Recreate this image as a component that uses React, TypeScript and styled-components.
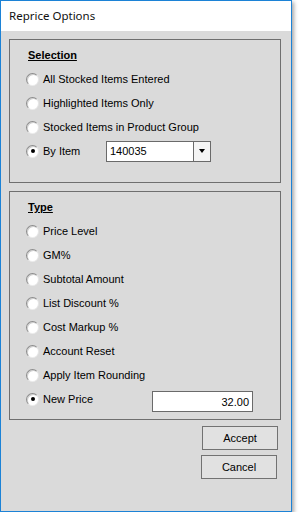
import React from "react";
import styled, { createGlobalStyle } from "styled-components";

const Global = createGlobalStyle`
  html, body { margin: 0; padding: 0; background: #ffffff; }
  * { box-sizing: border-box; }
`;

const Window = styled.div`
  width: 292px;
  height: 512px;
  border: 1px solid #1c82d6;
  display: flex;
  flex-direction: column;
  box-shadow: 2px 2px 4px rgba(0, 0, 0, 0.35);
  font-family: "Liberation Sans", Arial, sans-serif;
  font-size: 11px;
  color: #000;
`;

const TitleBar = styled.div`
  height: 30px;
  flex: none;
  background: #ffffff;
  display: flex;
  align-items: center;
  padding-left: 8px;
  padding-bottom: 1px;
  font-family: "Noto Sans", "Open Sans", sans-serif;
  font-size: 11.5px;
  color: #111;
`;

const Body = styled.div`
  flex: 1;
  background: #dadada;
  padding: 8px 0 0 8px;
  display: flex;
  flex-direction: column;
`;

const Group = styled.div<{ $height: number; $gap?: number }>`
  width: 272px;
  height: ${(p) => p.$height}px;
  margin-top: ${(p) => p.$gap ?? 0}px;
  border: 1px solid #6f6f6f;
  padding-top: 3px;
  display: flex;
  flex-direction: column;
`;

const Legend = styled.div`
  height: 24px;
  display: flex;
  align-items: center;
  padding-left: 18px;
  font-weight: bold;
  text-decoration: underline;
`;

const Row = styled.div`
  height: 24px;
  display: flex;
  align-items: center;
  padding-left: 16px;
`;

const Radio = styled.span<{ $checked?: boolean }>`
  width: 13px;
  height: 13px;
  flex: none;
  border-radius: 50%;
  border: 1px solid;
  border-color: #8c8c8c #e6e6e6 #ececec #8c8c8c;
  background: #ffffff;
  box-shadow: inset 1px 1px 0 #d0d0d0;
  margin-right: 4px;
  display: flex;
  align-items: center;
  justify-content: center;
  &::after {
    content: "";
    display: ${(p) => (p.$checked ? "block" : "none")};
    width: 4px;
    height: 4px;
    border-radius: 50%;
    background: #000;
  }
`;

const Label = styled.span<{ $width?: number }>`
  white-space: nowrap;
  ${(p) => (p.$width ? `width: ${p.$width}px; flex: none;` : "")}
`;

const Combo = styled.div`
  width: 105px;
  height: 21px;
  border: 1px solid #6a6a6a;
  background: #fff;
  display: flex;
`;

const ComboText = styled.div`
  flex: 1;
  display: flex;
  align-items: center;
  padding-left: 3px;
`;

const ComboButton = styled.div`
  width: 17px;
  border-left: 1px solid #6a6a6a;
  background: #f4f4f4;
  display: flex;
  align-items: center;
  justify-content: center;
  &::after {
    content: "";
    border-left: 3.5px solid transparent;
    border-right: 3.5px solid transparent;
    border-top: 4px solid #000;
  }
`;

const NumberInput = styled.div`
  width: 101px;
  height: 21px;
  margin-top: 5px;
  border: 1px solid #6a6a6a;
  background: #fff;
  display: flex;
  align-items: center;
  justify-content: flex-end;
  padding-right: 3px;
`;

const Buttons = styled.div`
  width: 272px;
  margin-top: 6px;
  padding-right: 3px;
  display: flex;
  flex-direction: column;
  align-items: flex-end;
  gap: 5px;
`;

const Button = styled.button<{ $shift?: number }>`
  width: 76px;
  height: 24px;
  margin: 0 ${(p) => p.$shift ?? 0}px 0 0;
  padding: 0;
  border: 1px solid #727272;
  background: #e1e1e1;
  font-family: "Liberation Sans", Arial, sans-serif;
  font-size: 11px;
  color: #000;
`;

const selection = [
  "All Stocked Items Entered",
  "Highlighted Items Only",
  "Stocked Items in Product Group",
];

const types = [
  "Price Level",
  "GM%",
  "Subtotal Amount",
  "List Discount %",
  "Cost Markup %",
  "Account Reset",
  "Apply Item Rounding",
];

export default function App() {
  return (
    <>
      <Global />
      <Window>
        <TitleBar>Reprice Options</TitleBar>
        <Body>
          <Group $height={144}>
            <Legend>Selection</Legend>
            {selection.map((s) => (
              <Row key={s}>
                <Radio />
                <Label>{s}</Label>
              </Row>
            ))}
            <Row>
              <Radio $checked />
              <Label $width={63}>By Item</Label>
              <Combo>
                <ComboText>140035</ComboText>
                <ComboButton />
              </Combo>
            </Row>
          </Group>
          <Group $height={229} $gap={8}>
            <Legend>Type</Legend>
            {types.map((t) => (
              <Row key={t}>
                <Radio />
                <Label>{t}</Label>
              </Row>
            ))}
            <Row>
              <Radio $checked />
              <Label $width={109}>New Price</Label>
              <NumberInput>32.00</NumberInput>
            </Row>
          </Group>
          <Buttons>
            <Button>Accept</Button>
            <Button $shift={1}>Cancel</Button>
          </Buttons>
        </Body>
      </Window>
    </>
  );
}
